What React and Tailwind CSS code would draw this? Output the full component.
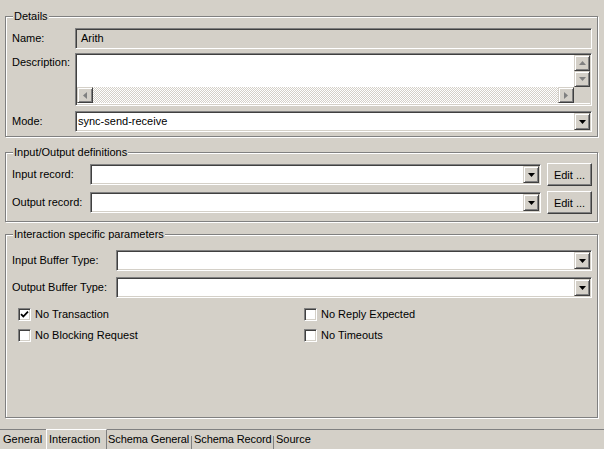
import React from "react";

const sunken =
  "border border-t-[#808080] border-l-[#808080] border-b-white border-r-white shadow-[inset_1px_1px_0_#404040,inset_-1px_-1px_0_#d4d0c8]";
const raised =
  "border border-t-[#d4d0c8] border-l-[#d4d0c8] border-b-[#404040] border-r-[#404040] shadow-[inset_1px_1px_0_#ffffff,inset_-1px_-1px_0_#808080] bg-[#d4d0c8]";
const group =
  "relative shrink-0 border border-[#808080] shadow-[inset_1px_1px_0_#ffffff,1px_1px_0_#ffffff]";

function Arrow({ dir, color = "#000" }) {
  const pts = {
    down: "0,0 7,0 3.5,4",
    up: "0,4 7,4 3.5,0",
    left: "4,0 4,7 0,3.5",
    right: "0,0 0,7 4,3.5",
  }[dir];
  const vertical = dir === "up" || dir === "down";
  return (
    <svg width={vertical ? 7 : 4} height={vertical ? 4 : 7} className="block">
      <polygon points={pts} fill={color} />
    </svg>
  );
}

function Legend({ children }) {
  return (
    <span className="absolute -top-[7px] left-[7px] px-[1px] bg-[#d4d0c8] leading-[13px] whitespace-nowrap">
      {children}
    </span>
  );
}

function Combo({ value = "", className = "" }) {
  return (
    <div className={`flex h-[21px] bg-white p-px ${sunken} ${className}`}>
      <div className="flex-1 pl-[1px] leading-[17px] truncate">{value}</div>
      <div className={`flex h-[17px] w-[16px] items-center justify-center ${raised}`}>
        <Arrow dir="down" />
      </div>
    </div>
  );
}

function Check({ checked, label }) {
  return (
    <div className="flex h-[13px] items-center gap-[4px]">
      <div className={`flex h-[13px] w-[13px] shrink-0 items-center justify-center bg-white ${sunken}`}>
        {checked && (
          <svg width="9" height="9" viewBox="0 0 9 9" className="block">
            <path d="M1 4.2 L3.3 6.5 L8 1.6" stroke="#000" strokeWidth="1.8" fill="none" />
          </svg>
        )}
      </div>
      <span className="leading-[13px] whitespace-nowrap">{label}</span>
    </div>
  );
}

export default function App() {
  return (
    <div
      className="w-[604px] h-[449px] bg-[#d4d0c8] text-[11px] text-black overflow-hidden flex flex-col"
      style={{ fontFamily: '"Liberation Sans", Arial, sans-serif' }}
    >
      {/* Details */}
      <div className={`${group} ml-[5px] mr-[6px] mt-[16px] h-[121px] pt-[11px] pl-[6px] pr-[5px]`}>
        <Legend>Details</Legend>
        <div className="flex items-center h-[21px]">
          <span className="w-[63px]">Name:</span>
          <div className={`flex-1 h-[21px] pl-[5px] leading-[19px] ${sunken}`}>Arith</div>
        </div>
        <div className="flex items-start mt-[4px]">
          <span className="w-[63px] pt-[1px]">Description:</span>
          <div className={`flex-1 h-[53px] bg-white p-px ${sunken}`}>
            <div className="grid h-[49px] grid-cols-[1fr_16px] grid-rows-[32px_16px]">
              <div className="bg-white" />
              <div className="flex flex-col">
                <div className={`flex h-[16px] items-center justify-center ${raised}`}>
                  <Arrow dir="up" color="#808080" />
                </div>
                <div className={`flex h-[16px] items-center justify-center ${raised}`}>
                  <Arrow dir="down" color="#808080" />
                </div>
              </div>
              <div className="flex">
                <div className={`flex w-[16px] items-center justify-center ${raised}`}>
                  <Arrow dir="left" color="#808080" />
                </div>
                <div className="flex-1 bg-[repeating-conic-gradient(#d4d0c8_0_25%,#ffffff_0_50%)] bg-[length:2px_2px]" />
                <div className={`flex w-[16px] items-center justify-center ${raised}`}>
                  <Arrow dir="right" color="#808080" />
                </div>
              </div>
              <div className="bg-[#d4d0c8]" />
            </div>
          </div>
        </div>
        <div className="flex items-center mt-[5px]">
          <span className="w-[63px]">Mode:</span>
          <Combo value="sync-send-receive" className="flex-1" />
        </div>
      </div>

      {/* Input/Output definitions */}
      <div className={`${group} ml-[5px] mr-[6px] mt-[15px] h-[70px] pt-[10px] pl-[6px] pr-[5px]`}>
        <Legend>Input/Output definitions</Legend>
        {["Input record:", "Output record:"].map((l, i) => (
          <div key={l} className={`flex items-center h-[23px] ${i ? "mt-[5px]" : ""}`}>
            <span className="w-[78px] whitespace-nowrap">{l}</span>
            <Combo className="flex-1" />
            <button className="ml-[6px] h-[23px] w-[45px] border border-t-white border-l-white border-b-[#404040] border-r-[#404040] shadow-[inset_-1px_-1px_0_#808080] bg-[#d4d0c8] leading-[20px] whitespace-nowrap">
              Edit ...
            </button>
          </div>
        ))}
      </div>

      {/* Interaction specific parameters */}
      <div className={`${group} ml-[5px] mr-[6px] mt-[12px] h-[184px] pt-[15px] pl-[6px] pr-[5px]`}>
        <Legend>Interaction specific parameters</Legend>
        <div className="flex items-center">
          <span className="w-[104px] whitespace-nowrap">Input Buffer Type:</span>
          <Combo className="flex-1" />
        </div>
        <div className="flex items-center mt-[6px]">
          <span className="w-[104px] whitespace-nowrap">Output Buffer Type:</span>
          <Combo className="flex-1" />
        </div>
        <div className="grid grid-cols-[286px_1fr] gap-y-[8px] mt-[10px] pl-[6px]">
          <Check checked label="No Transaction" />
          <Check label="No Reply Expected" />
          <Check label="No Blocking Request" />
          <Check label="No Timeouts" />
        </div>
      </div>

      {/* Tabs */}
      <div className="mt-[11px] h-[20px] shrink-0 flex border-t border-[#808080] leading-[19px] whitespace-nowrap">
        <div className="w-[46px] shrink-0 pl-[3px]">General</div>
        <div className="-mt-px h-[20px] w-[61px] shrink-0 border-t border-l border-white border-r border-r-[#808080] pl-[2px]">
          Interaction
        </div>
        <div className="w-[84px] shrink-0 pl-[1px] tracking-[-0.1px]">Schema General</div>
        <div className="self-end h-[13px] w-px shrink-0 bg-[#808080]" />
        <div className="w-[81px] shrink-0 pl-[2px] tracking-[-0.1px]">Schema Record</div>
        <div className="self-end h-[13px] w-px shrink-0 bg-[#808080]" />
        <div className="shrink-0 pl-[2px]">Source</div>
      </div>
    </div>
  );
}
